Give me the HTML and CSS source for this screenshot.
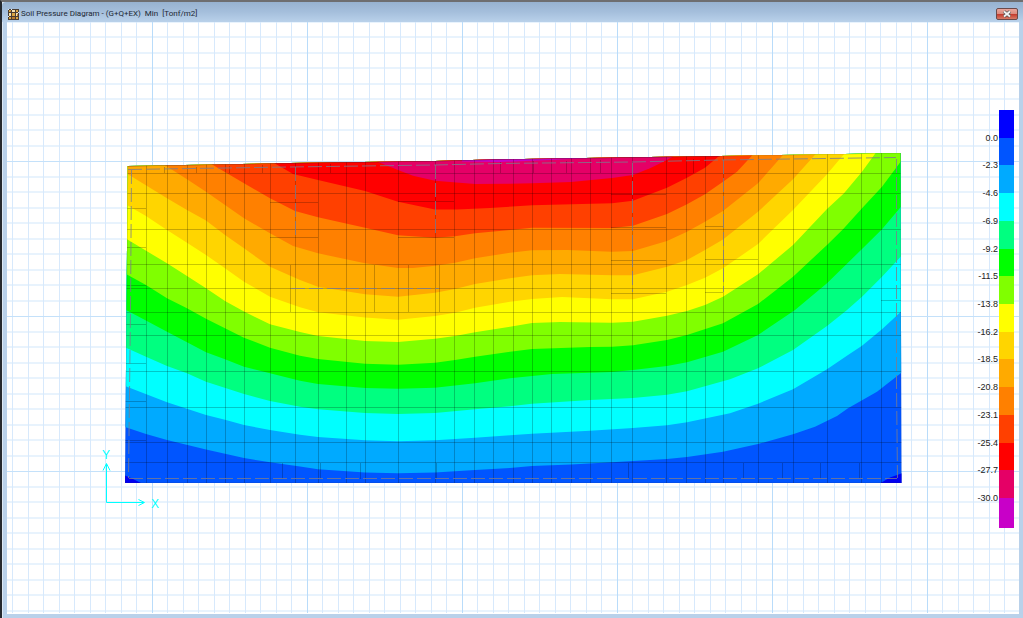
FILE: index.html
```html
<!DOCTYPE html>
<html lang="en">
<head>
<meta charset="utf-8">
<title>Soil Pressure Diagram</title>
<link rel="stylesheet" href="styles.css">
</head>
<body>
<main class="window">
  <header class="titlebar">
    <svg class="app-icon" viewBox="0 0 11 11" aria-hidden="true">
      <rect width="11" height="11" fill="#4a3d32"/>
      <path fill="#d9a441" d="M1 1h2v2H1zM4 4h3v3H4zM8 1h2v2H8zM1 8h2v2H1zM8 8h2v2H8z"/>
      <path fill="#f3e3b4" d="M4 1h3v2H4zM1 4h2v3H1zM8 4h2v3H8z"/>
      <path fill="#b87a2d" d="M4 8h3v2H4zM2 2h1v1H2zM9 5h1v2H9z"/>
      <path fill="#dfe8f2" d="M0 0h1v1H0zM10 3h1v1h-1zM0 7h1v1H0zM3 0h1v1H3z"/>
    </svg>
    <h1 class="title">Soil Pressure Diagram - (G+Q+EX)&nbsp; Min&nbsp; [Tonf/m2]</h1>
    <button class="close" type="button" aria-label="Close">
      <svg class="close-icon" viewBox="0 0 10 8" aria-hidden="true">
        <path d="M2 1.5L8 6.5M8 1.5L2 6.5" stroke="#555" stroke-width="3.4"/>
        <path d="M2 1.5L8 6.5M8 1.5L2 6.5" stroke="#f4f4f4" stroke-width="1.8"/>
      </svg>
    </button>
  </header>
  <section class="canvas">
    <svg class="plot" viewBox="7 22 1012 592" role="img" aria-label="Soil pressure contours">
      <defs>
        <pattern id="grid" x="152" y="161" width="155" height="155" patternUnits="userSpaceOnUse">
          <path fill="#e8f3fd" d="M0 15h155v2H0zM0 30h155v2H0zM0 46h155v2H0zM0 61h155v2H0zM0 77h155v2H0zM0 92h155v2H0zM0 108h155v2H0zM0 123h155v2H0zM0 139h155v2H0z"/>
          <path fill="#d7e9fc" d="M15 0h1v155h-1zM31 0h1v155h-1zM46 0h1v155h-1zM62 0h1v155h-1zM77 0h1v155h-1zM93 0h1v155h-1zM108 0h1v155h-1zM124 0h1v155h-1zM139 0h1v155h-1z"/>
          <path fill="#b9dcfa" d="M0 0h1v155H0z"/>
          <path fill="#c4e1fa" d="M0 0h155v1H0z"/>
        </pattern>
        <clipPath id="slab">
          <path d="M127.7 166L290 163L435 161L500 159.3L632 157.3L720 156L780 155L845 154L875 153.2L900.5 153L901.5 483H125Z"/>
        </clipPath>
      </defs>
      <rect x="7" y="22" width="1012" height="591" fill="url(#grid)"/>

      <g clip-path="url(#slab)">
        <rect x="120" y="150" width="790" height="340" fill="#0055ff"/>
        <path fill="#0000f0" d="M124 475L131 478L143 484H124ZM879 484L890 477.500L903 473V484Z"/>
        <path fill="#00aaff" d="M120 425L125 427L146 434L167 440L206 449.500L244 458L270 462.300L300 466.500L318 469.300L365 472.500L398 473.200L435 472.400L475 470L510 468L532 466L571 464.500L612 462.300L667 459L687 457L723 451.700L758 444L793 434.300L815 426.700L837 416L848 408.300L877 391.700L905 370V140H120Z"/>
        <path fill="#00ffff" d="M120 384L125 386L167 402.300L206 415L225 419.700L244 425L270 430L300 434.700L318 437L365 440.300L398 441.200L435 440.300L475 437.700L510 435.300L532 433.700L590 430.700L633 428L667 425.300L687 422.300L730 413.300L758 403.700L793 389.300L827 369.300L848 355L862 345.700L882 329.300L905 308V140H120Z"/>
        <path fill="#00ff80" d="M120 345L126 347.700L146 356.700L167 366L187 373.300L206 381.700L244 394L270 401L300 406.700L318 409.300L365 413L398 414L435 413L475 409.300L510 406.300L532 403.700L590 400L633 398L667 394.700L687 391.300L730 379.300L758 368.300L793 350L827 326L847 310L862 296.700L882 276.700L905 252V140H120Z"/>
        <path fill="#00ff00" d="M120 307L126 310L145 320L167 331.700L187 342.300L206 352.300L225 359.300L244 366.700L270 373.300L300 380.700L318 384L365 388L398 388.700L435 387.700L475 383.300L510 378.300L552 374L612 372L633 370L667 366L687 362.300L723 351.700L758 335L795 310L827 283.300L862 249L882 229.300L905 202V140H120Z"/>
        <path fill="#80ff00" d="M120 271L126 274L146 285L167 298.300L187 308.300L206 318.800L225 328.300L244 337.700L270 347.700L300 355.700L318 359L365 363.700L398 364.700L435 362.700L455 360L475 356.700L510 351.700L532 349L590 347L612 346.700L633 345.300L667 340L687 335L723 323.300L758 304L793 276.700L827 245L843 229.300L862 208.300L882 186.700L905 156V140H120Z"/>
        <path fill="#ffff00" d="M120 235L127 239.300L167 263.300L187 276L206 288.300L225 301L244 311.500L270 324.300L300 332L318 336L365 341L398 342L435 338.700L455 336L475 332.300L510 326.700L532 323L560 322L612 322.700L633 321.700L667 315.700L687 311L705 305L723 296.700L758 274.300L793 245L827 209L844 193.300L862 171.700L880 147V140H120Z"/>
        <path fill="#ffd500" d="M120 201L146 216L167 230L187 242.700L206 255L225 268.300L244 281.700L270 296.700L300 307.300L318 312.300L365 317.600L398 319.700L435 316L455 312.700L475 307.700L510 301.700L532 299L562 297L612 299.300H633L667 291.700L687 285L705 277.700L723 268.300L735 260L758 244L793 210L827 174.300L850 147V140H120Z"/>
        <path fill="#ffaa00" d="M120 170L128 174.300L167 198.300L187 210L206 220.500L225 235L244 248.300L270 266.700L300 280L318 286.700L365 294.300L398 296.700L435 292.700L455 289L475 284L510 278.300L532 275.300L560 274L612 275.300H633L667 266.700L687 260L705 250L723 239.500L758 211.700L793 179.300L822 147V140H120Z"/>
        <path fill="#ff8000" d="M155 159L167 166.500L187 179.300L206 191.700L225 205L244 218.300L270 233.300L293 246L318 253.300L365 263.300L398 268H413L435 265.700L455 262.700L475 258.300L510 252.700L532 250.300L567 250L612 251.700L633 251L667 241L687 231.700L705 221.700L723 211L758 183.300L790 147Z"/>
        <path fill="#ff4000" d="M203 159L213 165L244 183.300L270 198.300L295 211L318 217.300L365 227.700L398 235.300L435 237.700L455 236.300L475 233.300L510 230L532 227.700L612 228L633 225.700L667 214L687 204.300L705 194.300L723 181.700L737 171.700L760 147Z"/>
        <path fill="#ff0000" d="M267 159L275 163.500L293 174L318 180L365 191L398 201.700L435 209.500H457L490 208L532 205.300L612 203.300L633 200.700L667 187.700L687 177.700L705 167.700L730 147Z"/>
        <path fill="#e50066" d="M370 157L378 162L398 170L413 175.700L435 180.700L475 184L510 183.700L532 183.300L571 182L612 178L633 175L650 168.300L667 160L690 147Z"/>
        <path fill="#c800c8" d="M462 161.500L500 162L550 160L590 158V150H462Z"/>

        <g class="mesh">
          <path d="M146.500 150V483M167.500 150V483M187.500 150V483M206.500 150V483M225.500 150V483M244.500 150V483M270.500 150V483M295.500 150V483M318.500 150V483M346.500 150V483M365.500 150V483M398.500 150V483M435.500 150V483M454.500 150V483M474.500 150V483M493.500 150V483M513.500 150V483M532.500 150V483M551.500 150V483M571.500 150V483M590.500 150V483M611.500 150V483M632.500 150V483M666.500 150V483M686.500 150V483M705.500 150V483M723.500 150V483M758.500 150V483M793.500 150V483M827.500 150V483M861.500 150V483M881.500 150V483"/>
          <path d="M120 173.500H905M120 193.500H905M120 229.500H905M120 264.500H905M120 288.500H905M120 312.500H905M120 335.500H905M120 371.500H905M120 407.500H905M120 442.500H905M120 462.500H905"/>
          <path d="M125 208.500H146M125 247.500H146M125 285.500H146M125 324.500H146M125 363.500H146M125 401.500H146M125 440.500H146M270 202.500H318M270 237.500H318M398 201.500H454M398 237.500H454M611 194.500H666M611 227.500H666M611 260.500H666M611 293.500H666M705 226.500H723M705 259.500H758M705 292.500H723M881 300.500H903"/>
          <path d="M290.500 265V312M374.500 265V312M408.500 265V312M439.500 265V312M164.500 167V173M196.500 167V173M229.500 166V173M262.500 165V173M330.500 164V173M500.500 162V173M533.500 161V173M566.500 161V173M600.500 160V173M693.500 159V173"/>
          <path d="M282.500 463V479M320.500 463V479M360.500 463V479M436.500 463V479M628.500 463V479M743.500 463V479M782.500 463V479M820.500 463V479M859.500 463V479"/>
        </g>
        <path class="outline" d="M127.700 166L290 163L435 161L500 159.300L632 157.300L720 156"/>
        <path class="outline faint" d="M720 156L780 155L845 154L875 153.200L900.500 153L901.500 483H125L127.700 166"/>
      </g>
      <g class="walls">
        <path d="M131.500 170L130.500 310L128.500 478"/>
        <path d="M128 169.500L290 167L435 165L500 163.500L632 162L720 160L896 157.500"/>
        <path d="M896.500 159V385L897.500 478M129 478.500H897"/>
        <path d="M295.500 167V237M435.500 165V236M632.500 163V292M723.500 160V292M291 288.500H439"/>
      </g>
      <g class="axes">
        <path d="M106.500 464V502.500H144M103 470.500L106.500 463.500L110 470.500M138.500 499.500L144.500 502.500L138.500 505.500"/>
        <text x="102" y="459">Y</text>
        <text x="151" y="508">X</text>
      </g>
    </svg>
    <ol class="legend">
      <li class="band c1"></li>
      <li class="band c2"><span class="value">0.0</span></li>
      <li class="band c3"><span class="value">-2.3</span></li>
      <li class="band c4"><span class="value">-4.6</span></li>
      <li class="band c5"><span class="value">-6.9</span></li>
      <li class="band c6"><span class="value">-9.2</span></li>
      <li class="band c7"><span class="value">-11.5</span></li>
      <li class="band c8"><span class="value">-13.8</span></li>
      <li class="band c9"><span class="value">-16.2</span></li>
      <li class="band c10"><span class="value">-18.5</span></li>
      <li class="band c11"><span class="value">-20.8</span></li>
      <li class="band c12"><span class="value">-23.1</span></li>
      <li class="band c13"><span class="value">-25.4</span></li>
      <li class="band c14"><span class="value">-27.7</span></li>
      <li class="band c15"><span class="value">-30.0</span></li>
    </ol>
  </section>
</main>
</body>
</html>
```
FILE: styles.css
```css
* {
  box-sizing: border-box;
}

body {
  margin: 0;
  background: #777;
  font-family: Roboto, "Liberation Sans", sans-serif;
}

.window {
  display: flex;
  flex-direction: column;
  height: 100vh;
  padding: 0 4px 4px;
  border-top: 2px solid #6e6e70;
  border-left: 2px solid #25292e;
  background: #b9d1ea;
  box-shadow: inset 1px 1px 0 #dce8f4;
}

.titlebar {
  display: flex;
  align-items: center;
  gap: 2px;
  height: 20px;
  margin: 0 -4px;
  padding: 4px 5px 0 6px;
  border-top-left-radius: 4px;
  background: linear-gradient(#97b2d0, #a5bfdc 50%, #b9d1ea);
}

.app-icon {
  width: 11px;
  height: 11px;
}

.title {
  flex: 1;
  margin: 0;
  font-size: 8px;
  font-weight: 400;
  line-height: 12px;
  color: #1c2733;
  white-space: nowrap;
}

.close {
  display: flex;
  align-items: center;
  justify-content: center;
  width: 22px;
  height: 12px;
  padding: 0;
  border: 1px solid #6b4a4a;
  border-radius: 2px;
  background: linear-gradient(#e9a59b, #dd8d80 45%, #c3372a 50%, #d97a66);
}

.close-icon {
  width: 10px;
  height: 8px;
}

.canvas {
  position: relative;
  flex: 1;
  min-height: 0;
  margin-left: 1px;
  background: #fff;
}

.plot {
  display: block;
  width: 100%;
  height: 100%;
}

.mesh path {
  fill: none;
  stroke: #000;
  stroke-opacity: 0.22;
}

.outline {
  fill: none;
  stroke: #402030;
  stroke-opacity: 0.6;
}

.faint {
  stroke-opacity: 0.2;
}

.walls path {
  fill: none;
  stroke: #7c7c8c;
  stroke-opacity: 0.8;
  stroke-dasharray: 14 4;
}

.axes path {
  fill: none;
  stroke: #00ffff;
}

.axes text {
  font: 12px "Liberation Sans", sans-serif;
  fill: #00ffff;
}

.legend {
  position: absolute;
  top: 88px;
  right: 5px;
  display: grid;
  grid-template-columns: 15px;
  grid-template-rows: repeat(14, 1fr) 30px;
  height: 418px;
  margin: 0;
  padding: 0;
  list-style: none;
}

.band {
  display: flex;
  justify-content: flex-end;
}

.value {
  flex: none;
  height: 12px;
  margin-top: -6px;
  margin-right: 16px;
  font: 9px/12px "Liberation Sans", sans-serif;
  color: #222;
}

.c1 { background: #0000ff; }
.c2 { background: #0055ff; }
.c3 { background: #00aaff; }
.c4 { background: #00ffff; }
.c5 { background: #00ff80; }
.c6 { background: #00ff00; }
.c7 { background: #80ff00; }
.c8 { background: #ffff00; }
.c9 { background: #ffd500; }
.c10 { background: #ffaa00; }
.c11 { background: #ff8000; }
.c12 { background: #ff4000; }
.c13 { background: #ff0000; }
.c14 { background: #e50066; }
.c15 { background: #c800c8; }
```
